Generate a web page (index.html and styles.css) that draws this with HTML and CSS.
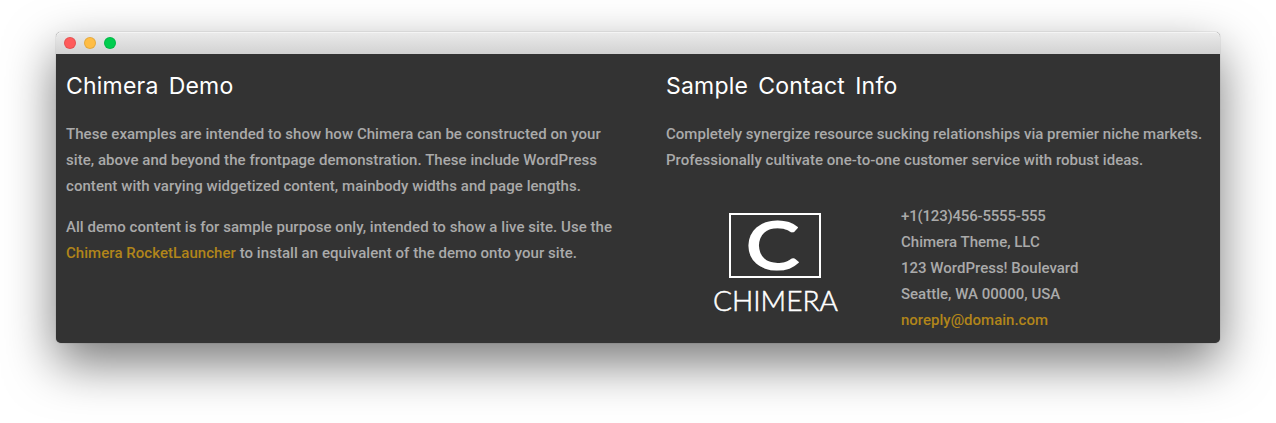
FILE: index.html
```html
<!DOCTYPE html>
<html lang="en">
<head>
<meta charset="utf-8">
<title>Chimera Demo</title>
<link rel="stylesheet" href="styles.css">
</head>
<body>
<div class="window">
  <header class="titlebar">
    <span class="dot red"></span><span class="dot yellow"></span><span class="dot green"></span>
  </header>
  <main class="content">
    <section class="column about">
      <h2 class="title">Chimera Demo</h2>
      <p>These examples are intended to show how Chimera can be constructed on your<br>site, above and beyond the frontpage demonstration. These include WordPress<br>content with varying widgetized content, mainbody widths and page lengths.</p>
      <p>All demo content is for sample purpose only, intended to show a live site. Use the<br><a class="link">Chimera RocketLauncher</a> to install an equivalent of the demo onto your site.</p>
    </section>
    <section class="column contact">
      <h2 class="title">Sample Contact Info</h2>
      <p>Completely synergize resource sucking relationships via premier niche markets.<br>Professionally cultivate one-to-one customer service with robust ideas.</p>
      <div class="details">
        <svg class="logo" width="126" height="102" viewBox="0 0 126 102">
          <rect class="logo-frame" x="17" y="2" width="90" height="63"/>
          <text class="logo-mark" x="33" y="57" textLength="53" lengthAdjust="spacingAndGlyphs">C</text>
          <text class="logo-name" x="0" y="98.5" textLength="125" lengthAdjust="spacingAndGlyphs">CHIMERA</text>
        </svg>
        <address class="address"><span class="phone">+1(123)456-5555-555</span><br>Chimera Theme, LLC<br>123 WordPress! Boulevard<br>Seattle, WA 00000, USA<br><a class="link">noreply@domain.com</a></address>
      </div>
    </section>
  </main>
</div>
</body>
</html>
```
FILE: styles.css
```css
body {
  margin: 0;
  padding: 32px 56px 80px;
  height: 311px;
  overflow: hidden;
  box-sizing: content-box;
  background: #fff;
  color: #aaa;
  font: 500 15px/26px Roboto, sans-serif;
}
.window {
  height: 311px;
  border-radius: 5px;
  background: #333;
  box-shadow: 0 0 1px rgba(0, 0, 0, .5), 0 20px 50px rgba(0, 0, 0, .53);
}
.titlebar {
  display: flex;
  align-items: center;
  gap: 8px;
  height: 22px;
  padding-left: 8px;
  box-sizing: border-box;
  border-radius: 5px 5px 0 0;
  background: linear-gradient(#ebebeb, #d2d2d2);
  box-shadow: inset 0 1px #f4f4f4;
}
.dot {
  width: 12px;
  height: 12px;
  border-radius: 50%;
  box-shadow: inset 0 0 0 1px rgba(0, 0, 0, .1);
}
.red { background: #ff5b5b; }
.yellow { background: #ffbd44; }
.green { background: #00cd4e; }
.content {
  display: grid;
  grid-template-columns: 600px 1fr;
  padding: 17px 0 0 10px;
}
.column { white-space: nowrap; }
.about p { letter-spacing: .05px; }
.contact p { letter-spacing: .02px; }
.title {
  margin: 0 0 20px;
  color: #fff;
  font: 400 23px/31px Inter, sans-serif;
  height: 30px;
  letter-spacing: .2px;
  word-spacing: 3.5px;
}
p { margin: 0 0 15px; }
.link { color: #b1851a; }
.details {
  display: flex;
  gap: 62px;
  padding: 15px 0 0 47px;
}
.logo {
  margin-top: 9px;
  overflow: visible;
}
.logo-frame { fill: none; stroke: #fff; stroke-width: 2; }
.logo-mark { fill: #fff; stroke: #fff; stroke-width: 2.2; font: 400 66px Lato, sans-serif; }
.logo-name { fill: #fff; stroke: #fff; stroke-width: .5; font: 300 28px Lato, sans-serif; }
.address { font-style: normal; }
.phone { letter-spacing: -.19px; }
```
